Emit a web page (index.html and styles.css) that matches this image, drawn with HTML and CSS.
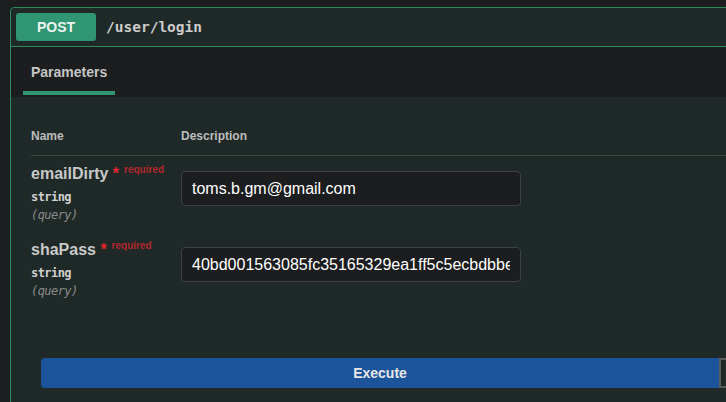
FILE: index.html
```html
<!DOCTYPE html>
<html>
<head>
<meta charset="utf-8">
<title>POST /user/login</title>
<link rel="stylesheet" href="styles.css">
</head>
<body>
<div class="opblock">
  <div class="summary">
    <span class="method">POST</span>
    <span class="path">/user/login</span>
  </div>
  <div class="section-header">
    <div class="tab"><h4>Parameters</h4></div>
  </div>
  <div class="params">
    <div class="row head">
      <div class="col-name">Name</div>
      <div class="col-desc">Description</div>
    </div>
    <div class="row param">
      <div class="col-name">
        <div class="pname">emailDirty<span class="star">&nbsp;*</span><span class="req">required</span></div>
        <div class="ptype">string</div>
        <div class="pin">(query)</div>
      </div>
      <div class="col-desc"><input class="field" type="text" value="toms.b.gm@gmail.com"></div>
    </div>
    <div class="row param">
      <div class="col-name">
        <div class="pname">shaPass<span class="star">&nbsp;*</span><span class="req">required</span></div>
        <div class="ptype">string</div>
        <div class="pin">(query)</div>
      </div>
      <div class="col-desc"><input class="field" type="text" value="40bd001563085fc35165329ea1ff5c5ecbdbbeef"></div>
    </div>
  </div>
  <div class="execute-wrapper">
    <button class="btn execute">Execute</button>
    <button class="btn clear" aria-label="Clear"></button>
  </div>
</div>
</body>
</html>
```

FILE: styles.css
```css
* { box-sizing: border-box; }
html, body { margin: 0; }
body {
  background: #1c1e1f;
  padding: 7px 0 0 10px;
  height: 402px;
  overflow: hidden;
  font-family: "Liberation Sans", Arial, sans-serif;
}
.opblock {
  width: 1422px;
  border: 1px solid #2e8b5e;
  border-radius: 4px;
  background: #1f2927;
  min-height: 420px;
}
.summary {
  display: flex;
  align-items: center;
  gap: 10px;
  padding: 5px;
  border-bottom: 1px solid #2e8b5e;
}
.method {
  width: 80px;
  height: 28px;
  display: flex;
  align-items: center;
  justify-content: center;
  background: #2f9573;
  border-radius: 3px;
  color: #eef3f0;
  font-weight: 700;
  font-size: 14px;
}
.path {
  font-family: "DejaVu Sans Mono", monospace;
  font-size: 14.5px;
  font-weight: 700;
  color: #cccccc;
}
.section-header {
  height: 50px;
  background: #1b1d1e;
  display: flex;
  align-items: flex-end;
  padding: 0 12px 2px;
}
.tab {
  padding: 0 8px 10px;
  border-bottom: 4px solid #2f9573;
}
.tab h4 {
  margin: 0;
  font-size: 14px;
  line-height: 18px;
  font-weight: 700;
  color: #c6c6c6;
}
.params { padding: 0 0 0 20px; }
.row { display: flex; }
.head {
  padding: 32px 0 12px;
  border-bottom: 1px solid #3a4540;
  font-size: 12px;
  line-height: 14px;
  font-weight: 700;
  color: #bdbdbd;
}
.col-name { width: 150px; flex: none; }
.param { height: 76px; }
.param .col-name { padding-top: 8px; }
.pname {
  font-size: 16px;
  line-height: 20px;
  font-weight: 700;
  color: #c9c9c9;
  white-space: nowrap;
}
.star { color: #e0282e; }
.req {
  position: relative;
  top: -6px;
  padding-left: 5px;
  font-size: 10px;
  color: #b0282d;
}
.ptype, .pin {
  margin-top: 4px;
  font-family: "DejaVu Sans Mono", monospace;
  font-size: 12px;
  letter-spacing: -0.55px;
  line-height: 14px;
}
.ptype { color: #cfcfcf; font-weight: 700; }
.pin { font-style: italic; color: #8a8a8a; }
.field {
  margin-top: 15px;
  width: 340px;
  height: 35px;
  padding: 0 10px;
  border: 1px solid #3d4144;
  border-radius: 4px;
  background: #1b1d1e;
  color: #ffffff;
  font-family: "Liberation Sans", Arial, sans-serif;
  font-size: 16px;
  outline: none;
}
.execute-wrapper {
  display: flex;
  padding: 50px 30px 30px;
}
.btn {
  flex: 1;
  height: 30px;
  font-family: "Liberation Sans", Arial, sans-serif;
  font-size: 14px;
  font-weight: 700;
}
.execute {
  background: #1b549b;
  color: #e6e6e6;
  border: none;
  border-radius: 4px 0 0 4px;
}
.clear {
  background: transparent;
  border: 2px solid #5c5c5c;
  color: #cccccc;
  border-radius: 0 4px 4px 0;
}
```
